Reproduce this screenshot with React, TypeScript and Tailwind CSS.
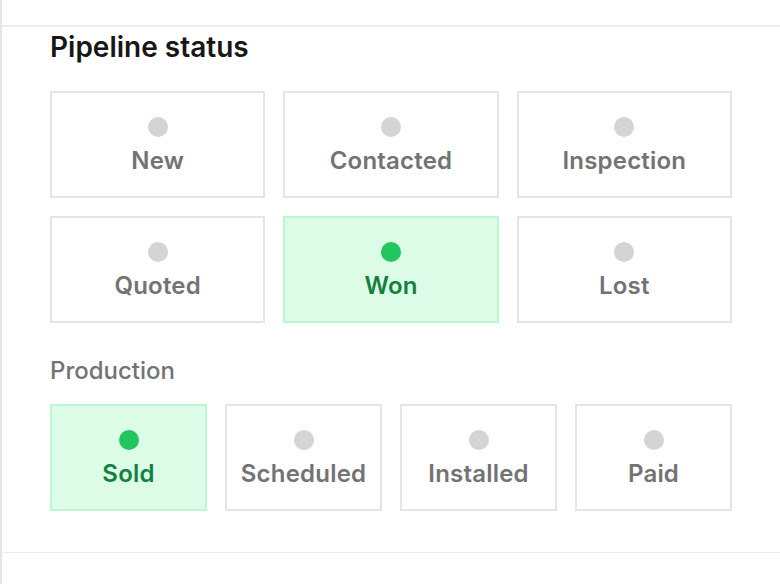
import React from "react";

type Option = { label: string; active?: boolean };

const pipeline: Option[] = [
  { label: "New" },
  { label: "Contacted" },
  { label: "Inspection" },
  { label: "Quoted" },
  { label: "Won", active: true },
  { label: "Lost" },
];

const production: Option[] = [
  { label: "Sold", active: true },
  { label: "Scheduled" },
  { label: "Installed" },
  { label: "Paid" },
];

const StatusTile = ({ label, active }: Option) => (
  <button
    className={
      "h-[107px] flex flex-col items-center justify-start pt-[24px] gap-[9px] border-2 " +
      (active ? "bg-[#dcfce7] border-[#bbf7d0]" : "bg-white border-[#e5e5e5]")
    }
  >
    <span className={"w-5 h-5 rounded-full " + (active ? "bg-[#22c55e]" : "bg-[#d4d4d4]")} />
    <span
      className={
        "text-[24px] leading-[29px] font-semibold tracking-[0.2px] " +
        (active ? "text-[#15803d]" : "text-[#737373]")
      }
    >
      {label}
    </span>
  </button>
);

export default function App() {
  return (
    <div className="h-[584px] border-l-2 border-[#e5e5e5] bg-white flex flex-col font-['Inter',sans-serif]">
      {/* Header strip */}
      <div className="h-[25px] shrink-0" />

      {/* Status section */}
      <section className="border-t-2 border-b border-[#ececec] px-12 pt-[3px] pb-[41px]">
        <h2 className="text-[28px] leading-[34px] font-semibold text-[#171717]">Pipeline status</h2>

        <div className="mt-[27px] grid grid-cols-3 gap-[18px]">
          {pipeline.map((o) => (
            <StatusTile key={o.label} {...o} />
          ))}
        </div>

        <p className="mt-[33px] text-[24px] leading-[29px] font-medium text-[#737373]">Production</p>

        <div className="mt-[19px] grid grid-cols-4 gap-[18px]">
          {production.map((o) => (
            <StatusTile key={o.label} {...o} />
          ))}
        </div>
      </section>

      <div className="flex-1" />
    </div>
  );
}
